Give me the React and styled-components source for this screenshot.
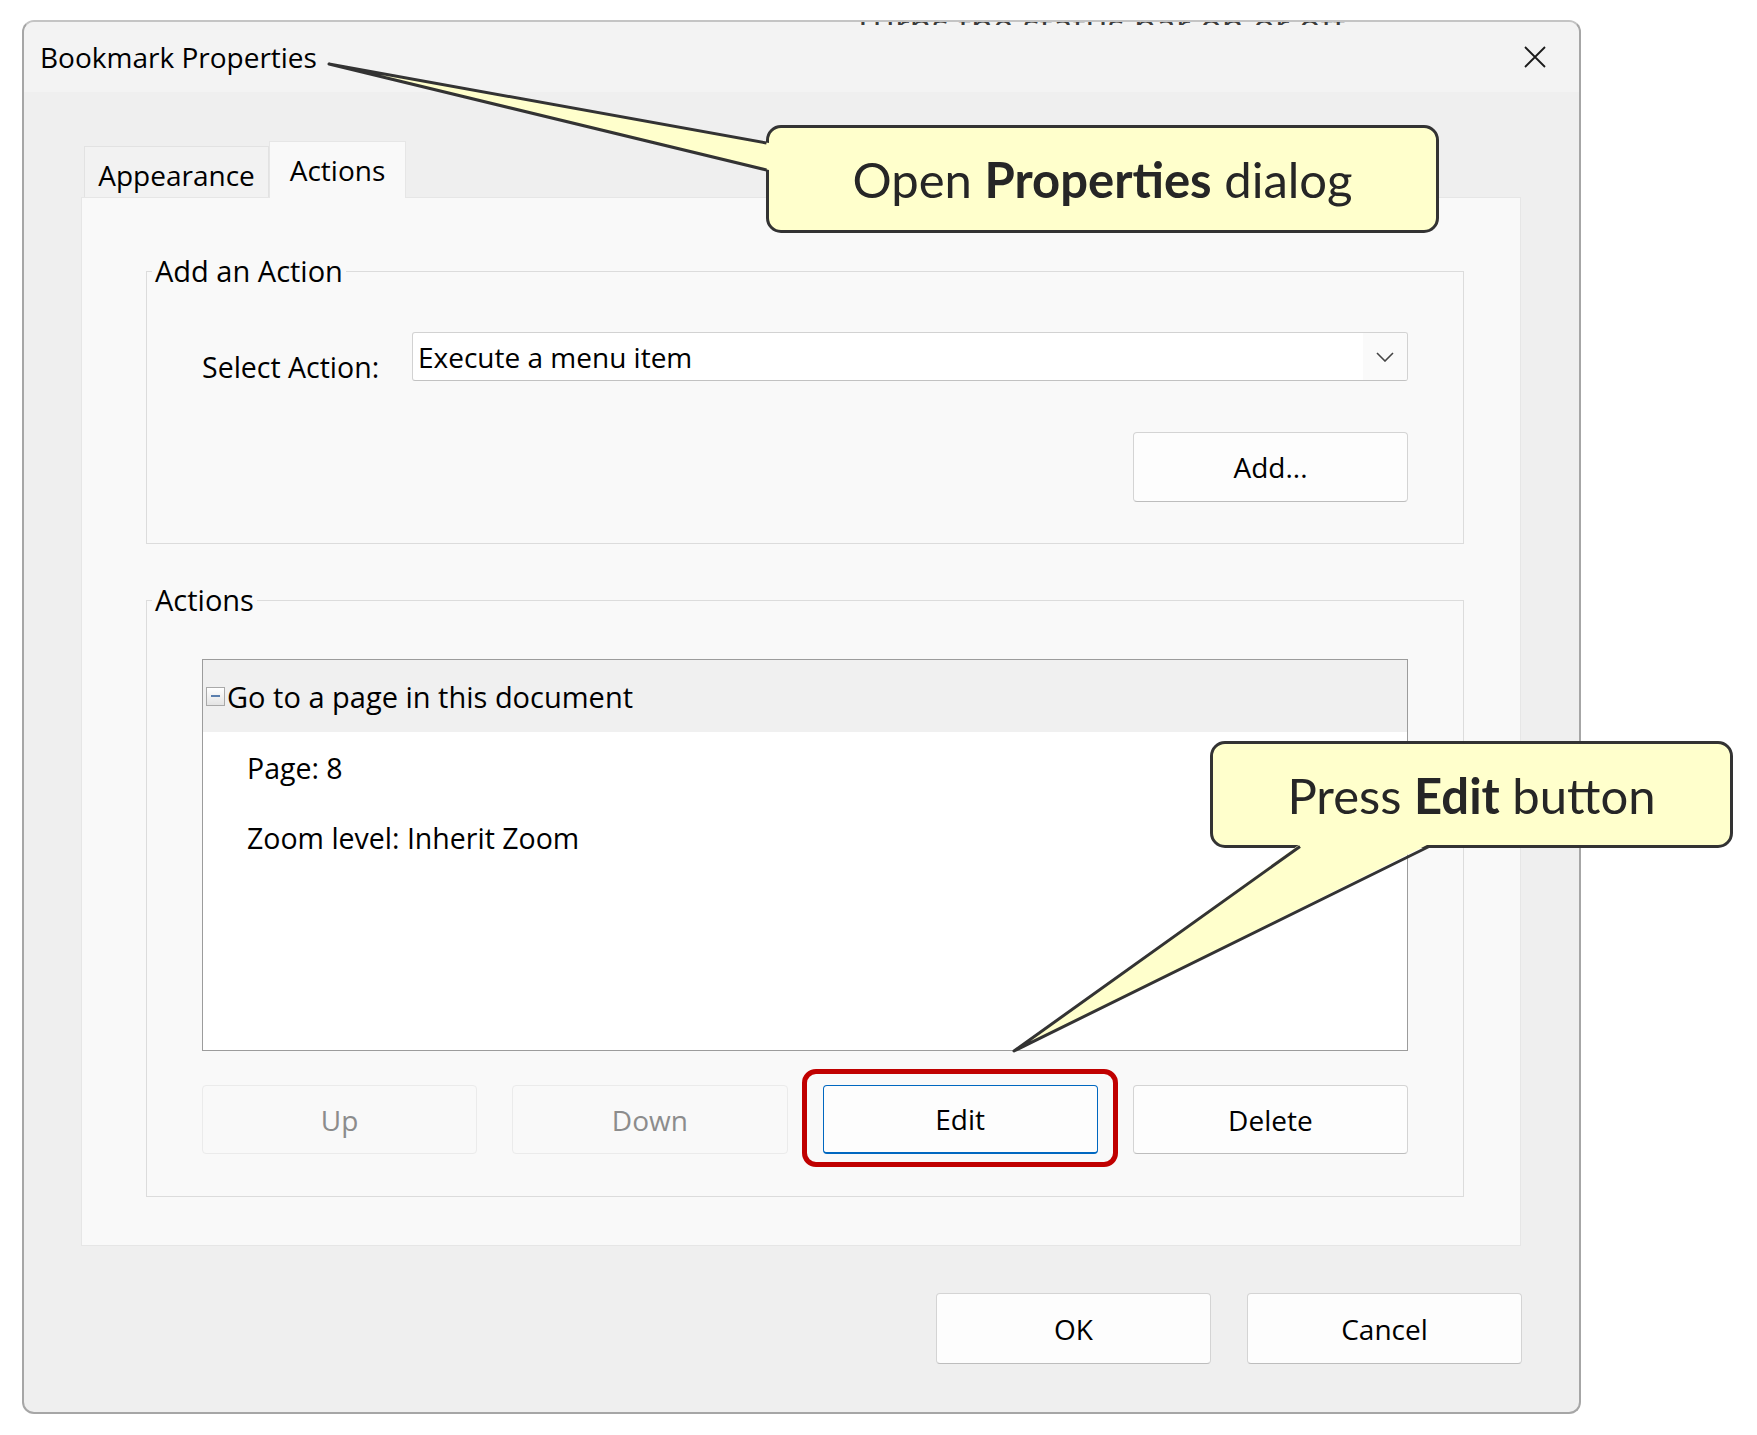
import React from 'react';
import styled, { createGlobalStyle } from 'styled-components';

const GlobalStyle = createGlobalStyle`
  html, body {
    margin: 0;
    padding: 0;
    background: #ffffff;
  }
  body {
    font-family: "Open Sans", "Noto Sans", sans-serif;
    color: #000;
  }
  * {
    box-sizing: border-box;
  }
`;

const Stage = styled.div`
  position: relative;
  width: 1757px;
  height: 1435px;
  padding: 20px 0 0 22px;
  overflow: hidden;
`;

const Dialog = styled.div`
  position: relative;
  width: 1559px;
  height: 1394px;
  display: flex;
  flex-direction: column;
  background: #efefef;
  border: 2px solid #a6a6a6;
  border-top-color: #c4c4c4;
  border-radius: 12px;
  overflow: hidden;
`;

/* page text behind the window, showing through its top edge */
const Bleed = styled.div`
  position: absolute;
  top: 0;
  left: 829px;
  height: 3px;
  overflow: hidden;
  white-space: nowrap;
  font-size: 36px;
  line-height: 36px;
  color: #3a3a3a;

  span {
    display: block;
    margin-top: -13px;
  }
`;

const TitleBar = styled.div`
  height: 70px;
  flex-shrink: 0;
  display: flex;
  align-items: center;
  justify-content: space-between;
  padding: 0 33px 0 16px;
  background: #f3f3f3;
  font-size: 28px;
`;

const CloseButton = styled.button`
  display: flex;
  align-items: center;
  justify-content: center;
  width: 22px;
  height: 22px;
  padding: 0;
  border: none;
  background: none;
  color: #1a1a1a;
`;

const Body = styled.div`
  flex: 1;
  display: flex;
  flex-direction: column;
  padding: 48px 58px 0 57px;
`;

const TabStrip = styled.div`
  display: flex;
  align-items: flex-end;
  height: 57px;
  margin-left: 3px;
  position: relative;
  z-index: 1;
`;

const Tab = styled.div`
  height: ${p => (p.$active ? 57 : 51)}px;
  padding: 9px 0 0;
  width: ${p => p.$w}px;
  margin-bottom: ${p => (p.$active ? -1 : 0)}px;
  text-align: center;
  font-size: 28px;
  line-height: 38px;
  background: ${p => (p.$active ? '#f9f9f9' : '#f2f2f2')};
  border: 1px solid ${p => (p.$active ? '#e6e6e6' : '#e2e2e2')};
  border-bottom: none;
`;

const Panel = styled.div`
  height: 1049px;
  display: flex;
  flex-direction: column;
  padding: 54px 56px 0 64px;
  background: #f9f9f9;
  border: 1px solid #e6e6e6;
`;

const Group = styled.fieldset`
  margin: ${p => p.$gap || 0}px 0 0;
  padding: 0;
  min-width: 0;
  border: 1px solid #dcdcdc;
`;

const Legend = styled.legend`
  margin-left: 5px;
  padding: 0 3px;
  font-size: 29px;
  line-height: 38px;
`;

const GroupContent = styled.div`
  display: flex;
  flex-direction: column;
  padding: ${p => p.$top}px 55px ${p => p.$bottom}px;
`;

const FieldRow = styled.div`
  display: flex;
  align-items: flex-start;
  height: 49px;
`;

const FieldLabel = styled.label`
  width: 210px;
  flex-shrink: 0;
  margin-top: 16px;
  font-size: 28.5px;
  line-height: 38px;
`;

const Select = styled.div`
  flex: 1;
  height: 49px;
  display: flex;
  align-items: center;
  background: #ffffff;
  border: 1px solid #d2d2d2;
  border-bottom-color: #c2c2c2;
  border-radius: 3px;
  overflow: hidden;
`;

const SelectValue = styled.span`
  flex: 1;
  padding-left: 5px;
  font-size: 28px;
  line-height: 38px;
`;

const SelectArrow = styled.span`
  width: 44px;
  height: 100%;
  display: flex;
  align-items: center;
  justify-content: center;
  background: #fafafa;
  color: #444;
`;

const ButtonRow = styled.div`
  display: flex;
  justify-content: flex-end;
  gap: 36px;
  margin-top: ${p => p.$gap || 0}px;
`;

const ButtonGrid = styled.div`
  display: grid;
  grid-template-columns: repeat(4, 1fr);
  gap: 35px;
  margin-top: 34px;
`;

const Button = styled.button`
  position: relative;
  width: ${p => (p.$w ? `${p.$w}px` : '100%')};
  height: ${p => p.$h || 69}px;
  padding: 0;
  font-family: inherit;
  font-size: 28px;
  color: ${p => (p.disabled ? '#8c8c8c' : '#000')};
  background: ${p => (p.disabled ? '#f9f9f9' : '#fdfdfd')};
  border: 1px solid ${p => (p.$focused ? '#0067c0' : p.disabled ? '#ebebeb' : '#d4d4d4')};
  border-bottom: ${p => (p.$focused ? '2px solid #0067c0' : p.disabled ? '1px solid #ebebeb' : '1px solid #bdbdbd')};
  border-radius: 4px;

  ${p => p.$highlight && `
    &::after {
      content: '';
      position: absolute;
      top: -17px;
      right: -21px;
      bottom: -15px;
      left: -22px;
      border: 5px solid #c00000;
      border-radius: 14px;
      pointer-events: none;
    }
  `}
`;

const ListBox = styled.div`
  height: 392px;
  display: flex;
  flex-direction: column;
  background: #ffffff;
  border: 1px solid #9c9c9c;
`;

const ListHeader = styled.div`
  height: 72px;
  display: flex;
  align-items: center;
  padding-left: 3px;
  background: #f0f0f0;
  font-size: 29px;
`;

const Toggle = styled.span`
  width: 19px;
  height: 19px;
  margin-right: 2px;
  display: inline-flex;
  align-items: center;
  justify-content: center;
  border: 1px solid #a9a9a9;
  background: linear-gradient(#ffffff, #e4e4e4);

  &::before {
    content: '';
    width: 9px;
    height: 2px;
    background: #5b7fae;
  }
`;

const ListDetails = styled.div`
  display: flex;
  flex-direction: column;
  gap: 32px;
  padding: 17px 0 0 44px;
  font-size: 28.5px;
  line-height: 38px;
`;

const Footer = styled.div`
  display: flex;
  justify-content: flex-end;
  gap: 36px;
  margin: 47px -1px 0 0;
`;

const Callout = styled.div`
  position: absolute;
  left: ${p => p.$x}px;
  top: ${p => p.$y}px;
  width: ${p => p.$w}px;
  height: ${p => p.$h}px;
  z-index: 2;
  display: flex;
  align-items: center;
  justify-content: center;
  background: #ffffcc;
  border: 3px solid #333333;
  border-radius: 15px;
  font-family: Lato, "Liberation Sans", sans-serif;
  font-size: 49px;
  color: #262626;
  white-space: pre;

  b {
    font-weight: 700;
  }
`;

const Tail = styled.svg`
  position: absolute;
  left: ${p => p.$x}px;
  top: ${p => p.$y}px;
  z-index: 3;
  overflow: visible;
`;

function CloseIcon() {
  return (
    <svg width="22" height="22" viewBox="0 0 22 22">
      <path d="M1 1 L21 21 M21 1 L1 21" stroke="currentColor" strokeWidth="1.8" fill="none" />
    </svg>
  );
}

function ChevronDown() {
  return (
    <svg width="18" height="10" viewBox="0 0 18 10">
      <polyline points="1,1 9,9 17,1" stroke="currentColor" strokeWidth="1.6" fill="none" />
    </svg>
  );
}

export default function App() {
  return (
    <>
      <GlobalStyle />
      <Stage>
        <Dialog>
          <Bleed>
            <span>Turns the status bar on or off</span>
          </Bleed>
          <TitleBar>
            <span>Bookmark Properties</span>
            <CloseButton aria-label="Close">
              <CloseIcon />
            </CloseButton>
          </TitleBar>

          <Body>
            <TabStrip>
              <Tab $w={185}>Appearance</Tab>
              <Tab $w={137} $active>Actions</Tab>
            </TabStrip>

            <Panel>
              <Group>
                <Legend>Add an Action</Legend>
                <GroupContent $top={42} $bottom={41}>
                  <FieldRow>
                    <FieldLabel>Select Action:</FieldLabel>
                    <Select>
                      <SelectValue>Execute a menu item</SelectValue>
                      <SelectArrow>
                        <ChevronDown />
                      </SelectArrow>
                    </Select>
                  </FieldRow>
                  <ButtonRow $gap={51}>
                    <Button $w={275} $h={70}>Add...</Button>
                  </ButtonRow>
                </GroupContent>
              </Group>

              <Group $gap={37}>
                <Legend>Actions</Legend>
                <GroupContent $top={40} $bottom={42}>
                  <ListBox>
                    <ListHeader>
                      <Toggle />
                      Go to a page in this document
                    </ListHeader>
                    <ListDetails>
                      <span>Page: 8</span>
                      <span>Zoom level: Inherit Zoom</span>
                    </ListDetails>
                  </ListBox>
                  <ButtonGrid>
                    <Button disabled>Up</Button>
                    <Button disabled>Down</Button>
                    <Button $focused $highlight>Edit</Button>
                    <Button>Delete</Button>
                  </ButtonGrid>
                </GroupContent>
              </Group>
            </Panel>

            <Footer>
              <Button $w={275} $h={71}>OK</Button>
              <Button $w={275} $h={71}>Cancel</Button>
            </Footer>
          </Body>
        </Dialog>

        <Callout $x={766} $y={125} $w={673} $h={108}>
          Open <b>Properties</b> dialog
        </Callout>
        <Tail $x={320} $y={55} width="455" height="125">
          <polygon points="9,9 449,88 449,115" fill="#ffffcc" />
          <polyline points="446.5,88 9,9 446.5,115" fill="none" stroke="#333333" strokeWidth="3" strokeLinejoin="round" />
        </Tail>

        <Callout $x={1210} $y={741} $w={523} $h={107}>
          Press <b>Edit</b> button
        </Callout>
        <Tail $x={1000} $y={840} width="440" height="220">
          <polygon points="300,4 429,4 14,211" fill="#ffffcc" />
          <polyline points="300,6.5 14,211 429,6.5" fill="none" stroke="#333333" strokeWidth="3" strokeLinejoin="round" />
        </Tail>
      </Stage>
    </>
  );
}
